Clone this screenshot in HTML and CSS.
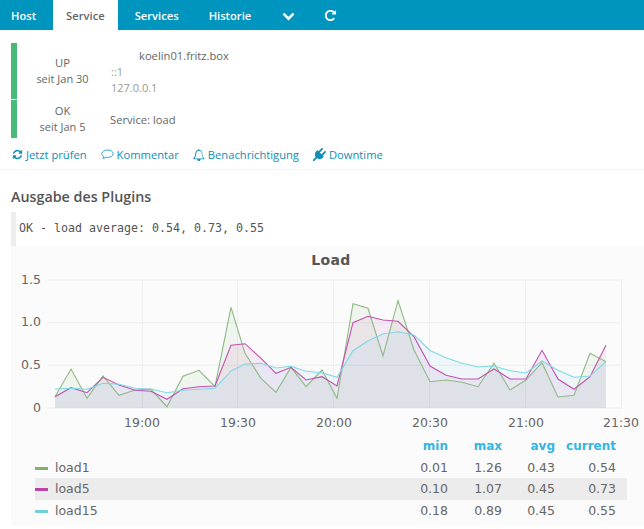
FILE: index.html
```html
<!DOCTYPE html>
<html lang="de">
<head>
    <meta charset="UTF-8">
    <meta name="viewport" content="width=device-width, initial-scale=1.0">
    <title>Service load</title>
    <link rel="stylesheet" href="styles.css">
</head>
<body>
    <nav class="tabs">
        <a class="tab tab-first">Host</a>
        <a class="tab active">Service</a>
        <a class="tab">Services</a>
        <a class="tab">Historie</a>
        <a class="tab tab-icon"><svg class="icon-nav" viewBox="0 0 1792 1792"><path d="M1683 808l-742 741q-19 19-45 19t-45-19l-742-741q-19-19-19-45.5t19-45.5l166-165q19-19 45-19t45 19l531 531 531-531q19-19 45-19t45 19l166 165q19 19 19 45.5t-19 45.5z"/></svg></a>
        <a class="tab"><svg class="icon-nav" viewBox="0 0 1792 1792"><path d="M1664 256v448q0 26-19 45t-45 19h-448q-42 0-59-40-17-39 14-69l138-138q-148-137-349-137-104 0-198.5 40.5t-163.5 109.5-109.5 163.5-40.5 198.5 40.5 198.5 109.5 163.5 163.5 109.5 198.5 40.5q119 0 225-52t179-147q7-10 23-12 15 0 25 9l137 138q9 8 9.5 20.5t-7.5 22.5q-109 132-264 204.5t-327 72.5q-156 0-298-61t-245-164-164-245-61-298 61-298 164-245 245-164 298-61q147 0 284.5 55.5t244.5 156.5l130-129q29-31 70-14 39 17 39 59z"/></svg></a>
    </nav>

    <section class="status">
        <div class="status-row status-host">
            <div class="status-state">
                <div>UP</div>
                <div>seit Jan 30</div>
            </div>
            <div class="status-info">
                <div class="hostname">koelin01.fritz.box</div>
                <div class="address">::1</div>
                <div class="address">127.0.0.1</div>
            </div>
        </div>
        <div class="status-row status-service">
            <div class="status-state">
                <div>OK</div>
                <div>seit Jan 5</div>
            </div>
            <div class="status-info service-name">Service: load</div>
        </div>
    </section>

    <div class="actions">
        <a class="action"><svg class="icon" viewBox="0 0 1792 1792"><path d="M1639 1056q0 5-1 7-64 268-268 434.5t-478 166.5q-146 0-282.5-55t-243.5-157l-129 129q-19 19-45 19t-45-19-19-45v-448q0-26 19-45t45-19h448q26 0 45 19t19 45-19 45l-137 137q71 66 161 102t187 36q134 0 250-65t186-179q11-17 53-117 8-23 30-23h192q13 0 22.5 9.5t9.5 22.5zm25-800v448q0 26-19 45t-45 19h-448q-26 0-45-19t-19-45 19-45l138-138q-148-137-349-137-134 0-250 65t-186 179q-11 17-53 117-8 23-30 23h-199q-13 0-22.5-9.5t-9.5-22.5v-7q65-268 270-434.5t480-166.5q146 0 284 55.5t245 156.5l130-129q19-19 45-19t45 19 19 45z"/></svg>Jetzt prüfen</a>
        <a class="action"><svg class="icon icon-comment" viewBox="0 0 16 16"><path d="M8 2.5C4.2 2.5 1 4.4 1 7c0 1.5 1 2.9 2.7 3.7-.2.9-.7 1.7-1.3 2.3 1.4-.2 2.7-.8 3.6-1.6.6.1 1.3.2 2 .2 3.8 0 7-1.9 7-4.6S11.800 2.500 8 2.500z"/></svg>Kommentar</a>
        <a class="action"><svg class="icon icon-bell" viewBox="0 0 1792 1792"><path d="M912 1696q0-16-16-16-59 0-101.500-42.500t-42.500-101.500q0-16-16-16t-16 16q0 73 51.500 124.500t124.500 51.500q16 0 16-16zm-666-288h1300q-266-300-266-832 0-51-24-105t-69-103-121.500-80.500-169.500-31.500-169.500 31.500-121.500 80.500-69 103-24 105q0 532-266 832zm1454 0q0 52-38 90t-90 38h-448q0 106-75 181t-181 75-181-75-75-181h-448q-52 0-90-38t-38-90q50-42 91-88t85-119.500 74.500-158.500 50-206 19.500-260q0-152 117-282.500t307-158.500q-8-19-8-39 0-40 28-68t68-28 68 28 28 68q0 20-8 39 190 28 307 158.500t117 282.500q0 139 19.500 260t50 206 74.500 158.500 85 119.500 91 88z"/></svg>Benachrichtigung</a>
        <a class="action"><svg class="icon icon-plug" viewBox="0 0 1792 1792"><path d="M1755 453q37 38 37 90.500t-37 90.500l-401 400 150 150-160 160q-163 163-389.500 186.500t-411.500-100.500l-362 362h-181v-181l362-362q-124-185-100.500-411.500t186.500-389.500l160-160 150 150 400-401q38-37 91-37t90 37 37 90.500-37 90.500l-400 401 234 234 401-400q38-37 91-37t90 37z"/></svg>Downtime</a>
    </div>

    <h2>Ausgabe des Plugins</h2>
    <pre class="plugin-output">OK - load average: 0.54, 0.73, 0.55</pre>

    <section class="panel">
        <div class="panel-title">Load</div>
        <!-- viewBox uses page coordinates so the points can be read straight off the picture -->
        <svg class="graph" viewBox="11 270 633 165">
            <g class="grid">
                <line x1="47" y1="280" x2="622" y2="280"/>
                <line x1="47" y1="322.700" x2="622" y2="322.700"/>
                <line x1="47" y1="365.300" x2="622" y2="365.300"/>
                <line x1="47" y1="408" x2="622" y2="408"/>
                <line x1="142.500" y1="280" x2="142.500" y2="408"/>
                <line x1="237.500" y1="280" x2="237.500" y2="408"/>
                <line x1="333.500" y1="280" x2="333.500" y2="408"/>
                <line x1="429.500" y1="280" x2="429.500" y2="408"/>
                <line x1="525.500" y1="280" x2="525.500" y2="408"/>
                <line x1="621.500" y1="280" x2="621.500" y2="408"/>
            </g>

            <polygon class="area load1" points="55,408 55,396.700 71,369 87,398.300 103,376 119,395.300 135,390 151,389.300 167,406.700 183,376.300 199,370.300 215,386.700 231,307.300 245,353.300 261,378.300 276,392.300 291,367.300 306,386.700 322,370 337,398.300 353,303.700 368,308.300 383,356 398,300.700 414,350 430,381.700 446,380 462,382.300 478,386.700 494,363.300 510,390 526,380 542,362.700 558,397 574,395.300 590,353.300 606,361.700 606,408"/>
            <polygon class="area load5" points="55,408 55,396.700 71,387.700 87,392.700 103,377.300 119,385 135,390.300 151,391.300 167,399.300 183,388.700 199,386.700 215,386 231,345.300 245,343.700 261,358.300 276,373.300 291,367.300 306,380 322,376.700 337,386 353,322.700 368,316.300 383,320 398,321.300 414,336.700 430,366 446,375.300 462,379 478,379 494,369 510,379 526,379 542,350.300 558,379 574,389.300 590,376.700 606,345.300 606,408"/>
            <polygon class="area load15" points="55,408 55,389 71,388.300 87,389.300 103,383.300 119,384.300 135,388.300 151,389 167,392.700 183,390.300 199,389.300 215,388.300 231,371 245,364 261,363.300 276,368 291,366.300 306,371.300 322,372.700 337,377.300 353,350.700 368,340.700 383,334 398,331.700 414,335 430,350.500 446,357.700 462,363.300 478,367 494,366 510,370.700 526,373 542,361 558,370.300 574,377.300 590,376 606,361.700 606,408"/>

            <polyline class="line load1" points="55,396.700 71,369 87,398.300 103,376 119,395.300 135,390 151,389.300 167,406.700 183,376.300 199,370.300 215,386.700 231,307.300 245,353.300 261,378.300 276,392.300 291,367.300 306,386.700 322,370 337,398.300 353,303.700 368,308.300 383,356 398,300.700 414,350 430,381.700 446,380 462,382.300 478,386.700 494,363.300 510,390 526,380 542,362.700 558,397 574,395.300 590,353.300 606,361.700"/>
            <polyline class="line load5" points="55,396.700 71,387.700 87,392.700 103,377.300 119,385 135,390.300 151,391.300 167,399.300 183,388.700 199,386.700 215,386 231,345.300 245,343.700 261,358.300 276,373.300 291,367.300 306,380 322,376.700 337,386 353,322.700 368,316.300 383,320 398,321.300 414,336.700 430,366 446,375.300 462,379 478,379 494,369 510,379 526,379 542,350.300 558,379 574,389.300 590,376.700 606,345.300"/>
            <polyline class="line load15" points="55,389 71,388.300 87,389.300 103,383.300 119,384.300 135,388.300 151,389 167,392.700 183,390.300 199,389.300 215,388.300 231,371 245,364 261,363.300 276,368 291,366.300 306,371.300 322,372.700 337,377.300 353,350.700 368,340.700 383,334 398,331.700 414,335 430,350.500 446,357.700 462,363.300 478,367 494,366 510,370.700 526,373 542,361 558,370.300 574,377.300 590,376 606,361.700"/>

            <g class="y-labels">
                <text x="41" y="283.500">1.5</text>
                <text x="41" y="326">1.0</text>
                <text x="41" y="369">0.5</text>
                <text x="41" y="411.500">0</text>
            </g>
            <g class="x-labels">
                <text x="142" y="427">19:00</text>
                <text x="238" y="427">19:30</text>
                <text x="334" y="427">20:00</text>
                <text x="430" y="427">20:30</text>
                <text x="526" y="427">21:00</text>
                <text x="621" y="427">21:30</text>
            </g>
        </svg>

        <div class="legend">
            <div class="legend-row legend-head">
                <span></span><span>min</span><span>max</span><span>avg</span><span>current</span>
            </div>
            <div class="legend-row">
                <span class="legend-name"><i class="swatch swatch-load1"></i>load1</span><span>0.01</span><span>1.26</span><span>0.43</span><span>0.54</span>
            </div>
            <div class="legend-row hovered">
                <span class="legend-name"><i class="swatch swatch-load5"></i>load5</span><span>0.10</span><span>1.07</span><span>0.45</span><span>0.73</span>
            </div>
            <div class="legend-row">
                <span class="legend-name"><i class="swatch swatch-load15"></i>load15</span><span>0.18</span><span>0.89</span><span>0.45</span><span>0.55</span>
            </div>
        </div>
    </section>
</body>
</html>
```

FILE: styles.css
```css
body {
    font-family: "Open Sans", Arial, sans-serif;
    font-size: 11.2px;
    color: #666;
    background-color: #fff;
    margin: 0;
    padding: 0;
    height: 529px;
    overflow: hidden;
}

/* top tabs */
.tabs {
    display: flex;
    gap: 4px;
    height: 30px;
    background-color: #0095bf;
}
.tab {
    display: flex;
    align-items: center;
    padding: 0 13px;
    color: #fff;
    font-size: 11.2px;
    font-weight: 600;
}
.tab-first {
    padding-left: 11px;
}
.tab-icon {
    padding-left: 14px;
    padding-right: 12px;
}
.tab.active {
    background-color: #fff;
    color: #666;
}
.icon-nav {
    width: 13px;
    height: 13px;
    fill: #fff;
}

/* host and service state */
.status {
    display: flex;
    flex-direction: column;
    gap: 1px;
    margin: 13px 0 0 11px;
}
.status-row {
    display: flex;
    align-items: center;
    border-left: 6px solid #48bb78;
    line-height: 16px;
}
.status-host {
    height: 56px;
}
.status-service {
    height: 38px;
}
.status-state {
    width: 91px;
    text-align: center;
}
.status-state div:last-child {
    font-size: 11px;
}
.status-info {
    padding-left: 2px;
    font-size: 11.2px;
}
.service-name {
    padding-top: 2px;
}
.hostname {
    padding-left: 29px;
    margin-top: 2px;
}
.address {
    padding-left: 1px;
    color: #999;
    font-size: 11px;
}

/* action links */
.actions {
    display: flex;
    gap: 14px;
    height: 29px;
    padding-top: 2px;
    align-items: center;
    padding-left: 12px;
    border-bottom: 1px solid #f2f2f2;
}
.action {
    display: flex;
    align-items: center;
    gap: 3px;
    color: #0d8fb8;
}
.icon {
    width: 11px;
    height: 11px;
    fill: #0d8fb8;
}
.icon-comment {
    width: 13px;
    height: 13px;
    fill: none;
    stroke: #0d8fb8;
    stroke-width: 1;
}
.icon-bell {
    width: 12px;
    height: 12px;
}
.icon-plug {
    width: 13px;
    height: 13px;
}

h2 {
    margin: 17px 0 0 11px;
    font-size: 14.3px;
    line-height: 20px;
    font-weight: 600;
    color: #555;
}

.plugin-output {
    margin: 5px 0 0 11px;
    height: 34px;
    line-height: 33px;
    padding-left: 3px;
    border-left: 5px solid #eee;
    font-family: "DejaVu Sans Mono", monospace;
    font-size: 11.64px;
    color: #555;
}

/* graph panel */
.panel {
    margin-left: 11px;
    height: 280px;
    background-color: #fbfbfb;
    font-family: "DejaVu Sans", sans-serif;
}
.panel-title {
    height: 24px;
    padding: 6px 0 0 7px;
    box-sizing: border-box;
    line-height: 17px;
    text-align: center;
    font-size: 14px;
    font-weight: bold;
    color: #555;
    letter-spacing: 0.4px;
}
.graph {
    display: block;
    width: 633px;
    height: 165px;
}
.grid line {
    stroke: #eee;
    stroke-width: 1;
}
.area {
    stroke: none;
}
.line {
    fill: none;
    stroke-width: 1.1;
}
.area.load1 { fill: rgba(126, 178, 109, 0.09); }
.area.load5 { fill: rgba(186, 67, 169, 0.09); }
.area.load15 { fill: rgba(110, 195, 240, 0.09); }
.line.load1 { stroke: #8fb982; }
.line.load5 { stroke: #c052b0; }
.line.load15 { stroke: #7fd8e6; }
.y-labels text,
.x-labels text {
    font-size: 12.5px;
    fill: #666;
}
.y-labels text {
    text-anchor: end;
}
.x-labels text {
    text-anchor: middle;
}

/* legend under the graph */
.legend {
    margin-left: 24px;
    width: 592px;
    font-size: 12.5px;
}
.legend-row {
    display: grid;
    grid-template-columns: 1fr 40px 54px 53px 61px;
    height: 21.500px;
    line-height: 21px;
    padding-right: 11px;
    text-align: right;
    color: #666;
}
.legend-head {
    color: #33b5e5;
    font-size: 12px;
    font-weight: bold;
    line-height: 23px;
}
.legend-name {
    display: flex;
    align-items: center;
    gap: 7px;
    text-align: left;
}
.hovered {
    background-color: #ececec;
}
.swatch {
    width: 13px;
    height: 3px;
    margin-top: 2px;
}
.swatch-load1 { background-color: #7eb26d; }
.swatch-load5 { background-color: #ba43a9; }
.swatch-load15 { background-color: #6ed0e0; }
```
